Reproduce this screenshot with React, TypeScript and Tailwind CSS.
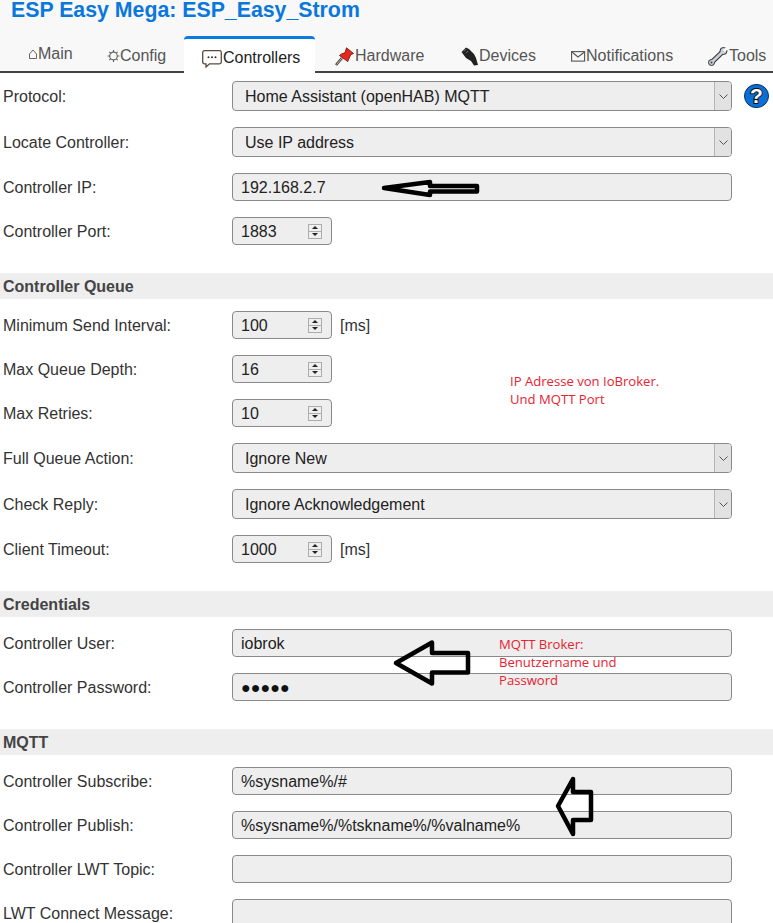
const F = "font-['Liberation_Sans',Arial,sans-serif]";

function SelectBox({ value }: { value: string }) {
  return (
    <div className="flex h-[30px] w-[500px] items-center justify-between rounded-[4px] border border-[#8a8a8a] bg-[#eeeeee] pl-[12px]">
      <span className="pt-[2px] text-[16px] text-[#222]">{value}</span>
      <div className="flex h-full w-[17px] items-center justify-center rounded-r-[3px] border-l border-[#b4b4b4] bg-[#e2e2e2]">
        <svg width="9" height="5" viewBox="0 0 9 5" fill="none" stroke="#555" strokeWidth="1">
          <path d="M0.5 0.5 L4.5 4.5 L8.5 0.5" />
        </svg>
      </div>
    </div>
  );
}

function TextBox({ value, masked }: { value?: string; masked?: boolean }) {
  return (
    <div className="flex h-[28px] w-[500px] items-center rounded-[4px] border border-[#8a8a8a] bg-[#eeeeee] pt-[2px] pl-[8px]">
      <span className={masked ? 'text-[16px] tracking-[0.1px] text-[#111]' : 'text-[16px] text-[#222]'}>{value}</span>
    </div>
  );
}

function NumberBox({ value }: { value: string }) {
  return (
    <div className="flex h-[28px] w-[100px] items-center justify-between rounded-[4px] border border-[#8a8a8a] bg-[#eeeeee] pr-[9px] pl-[8px]">
      <span className="pt-[2px] text-[16px] text-[#222]">{value}</span>
      <div className="flex h-[15px] w-[14px] flex-col border border-[#adadad] bg-[#efefef]">
        <div className="flex flex-1 items-center justify-center border-b border-[#adadad]">
          <svg width="6" height="3" viewBox="0 0 6 3"><path d="M3 0 L6 3 L0 3 Z" fill="#222" /></svg>
        </div>
        <div className="flex flex-1 items-center justify-center">
          <svg width="6" height="3" viewBox="0 0 6 3"><path d="M0 0 L6 0 L3 3 Z" fill="#222" /></svg>
        </div>
      </div>
    </div>
  );
}

function Row({ label, tall, children }: { label: string; tall?: boolean; children: React.ReactNode }) {
  return (
    <div className={tall ? 'flex h-[46px] items-center' : 'flex h-[44px] items-center'}>
      <div className="w-[232px] pt-[2px] pl-[3px] text-[16px] text-[#333]">{label}</div>
      {children}
    </div>
  );
}

function Section({ title }: { title: string }) {
  return <div className="mt-5 mb-1 flex h-[26px] items-center bg-[#eeeeee] pt-[2px] pl-[3px] text-[16px] font-bold text-[#444]">{title}</div>;
}

function Tab({ icon, label, className }: { icon: React.ReactNode; label: string; className: string }) {
  return (
    <div className={`flex h-[35px] shrink-0 items-center pt-[5px] pl-[18px] text-[16px] whitespace-nowrap text-[#555] ${className}`}>
      {icon}
      {label}
    </div>
  );
}

export default function App() {
  return (
    <div className={`relative h-[923px] w-[773px] overflow-hidden bg-white ${F}`}>
      <div className="h-[71px] bg-[#f8f8f8]">
        <div className="h-[36px] pl-[11px] text-[21.3px] leading-[21px] font-bold text-[#0a77dd]">ESP Easy Mega: ESP_Easy_Strom</div>
        <div className="relative z-10 flex pl-[10px]">
          <Tab
            label="Main"
            className="w-[79px] pb-[4px]"
            icon={
              <svg width="10" height="10" viewBox="0 0 10 10" fill="none" stroke="#666" strokeWidth="1" className="shrink-0">
                <path d="M1.5 9.5 L1.5 5 L5 1 L8.5 5 L8.5 9.5 Z" />
              </svg>
            }
          />
          <Tab
            label="Config"
            className="w-[95px]"
            icon={
              <svg width="13" height="14" viewBox="0 0 13 14" fill="none" stroke="#666" strokeWidth="1.2" className="shrink-0">
                <circle cx="6.5" cy="7" r="3.8" />
                <path d="M6.5 1v2M6.5 11v2M0.5 7h2M10.5 7h2M2.3 2.8l1.4 1.4M9.3 9.8l1.4 1.4M2.3 11.2l1.4-1.4M9.3 4.2l1.4-1.4" />
              </svg>
            }
          />
          <div className="mb-[-2px] flex h-[37px] w-[131px] shrink-0 items-center rounded-t-[4px] border-t-[3px] border-[#0a7be0] bg-white pt-[3px] pl-[18px] text-[16px] whitespace-nowrap text-[#222]">
            <svg width="21" height="18" viewBox="0 0 21 18" className="mt-[2px] shrink-0">
              <path d="M2.5 0.7h15a1.8 1.8 0 0 1 1.8 1.8v9.5a1.8 1.8 0 0 1-1.8 1.8H7.5l-3.5 3.2v-3.2H2.5a1.8 1.8 0 0 1-1.8-1.8V2.5a1.8 1.8 0 0 1 1.8-1.8z" fill="#fff" stroke="#5c4a40" strokeWidth="1.3" />
              <circle cx="6.5" cy="7.2" r="1" fill="#333" />
              <circle cx="10" cy="7.2" r="1" fill="#333" />
              <circle cx="13.5" cy="7.2" r="1" fill="#333" />
            </svg>
            Controllers
          </div>
          <Tab
            label="Hardware"
            className="w-[128px] pl-[20px]"
            icon={
              <svg width="20" height="19" viewBox="0 0 20 19" className="shrink-0">
                <path d="M1 18 L7 11" stroke="#3a3a3a" strokeWidth="2.6" />
                <path d="M1.5 17.5 L7 11" stroke="#d8c8a8" strokeWidth="1" />
                <path d="M11.5 0.8 L18.5 6.5 L15.8 7.6 L13.5 12.5 L12.8 14.5 L4.5 8.5 L6.5 7 L10 5.8 Z" fill="#e8281c" stroke="#7a160f" strokeWidth="0.9" />
              </svg>
            }
          />
          <Tab
            label="Devices"
            className="w-[110px]"
            icon={
              <svg width="18" height="19" viewBox="0 0 18 19" className="shrink-0">
                <path d="M0.5 5 L5 0.5 L8 2 L13 7 L15 11 L17 18 L13 18.5 L10 14 L5 11 Z" fill="#222" />
                <path d="M2.8 4.5 L5 2.2 M5 6.2 L7.2 4" stroke="#8a8a8a" strokeWidth="0.8" />
              </svg>
            }
          />
          <Tab
            label="Notifications"
            className="w-[137px]"
            icon={
              <svg width="15" height="11" viewBox="0 0 15 11" fill="none" stroke="#555" strokeWidth="1.1" className="shrink-0">
                <rect x="0.6" y="0.6" width="13" height="9.5" />
                <path d="M1 1 L7 6 L13.5 1" />
              </svg>
            }
          />
          <Tab
            label="Tools"
            className="w-[83px]"
            icon={
              <svg width="21" height="19" viewBox="0 0 21 19" fill="none" className="shrink-0">
                <path d="M3.5 15.5 L15.5 4" stroke="#2f2f2f" strokeWidth="5" />
                <circle cx="3.5" cy="15.500" r="3" fill="#c9ced6" stroke="#2f2f2f" strokeWidth="1" />
                <circle cx="15.5" cy="4" r="3.5" fill="#c9ced6" stroke="#2f2f2f" strokeWidth="1" />
                <path d="M3.5 15.5 L15.5 4" stroke="#c9ced6" strokeWidth="3" />
                <circle cx="3.5" cy="15.5" r="1" fill="#444" />
                <path d="M20 0 L16 4" stroke="#f8f8f8" strokeWidth="2.6" />
              </svg>
            }
          />
        </div>
      </div>
      <div className="h-[2px] bg-[#444]" />

      <Row label="Protocol:" tall>
        <SelectBox value="Home Assistant (openHAB) MQTT" />
        <div className="ml-3 flex h-[24px] w-[25px] items-center justify-center rounded-full border border-[#10325a] bg-[#0a6fd6] text-[21px] font-bold text-white [-webkit-text-stroke:2px_#111] [paint-order:stroke_fill]">?</div>
      </Row>
      <Row label="Locate Controller:" tall>
        <SelectBox value="Use IP address" />
      </Row>
      <Row label="Controller IP:">
        <TextBox value="192.168.2.7" />
      </Row>
      <Row label="Controller Port:">
        <NumberBox value="1883" />
      </Row>

      <Section title="Controller Queue" />
      <Row label="Minimum Send Interval:">
        <NumberBox value="100" />
        <span className="ml-2 pt-[2px] text-[16px] text-[#333]">[ms]</span>
      </Row>
      <Row label="Max Queue Depth:">
        <NumberBox value="16" />
      </Row>
      <Row label="Max Retries:">
        <NumberBox value="10" />
      </Row>
      <Row label="Full Queue Action:" tall>
        <SelectBox value="Ignore New" />
      </Row>
      <Row label="Check Reply:" tall>
        <SelectBox value="Ignore Acknowledgement" />
      </Row>
      <Row label="Client Timeout:">
        <NumberBox value="1000" />
        <span className="ml-2 pt-[2px] text-[16px] text-[#333]">[ms]</span>
      </Row>

      <Section title="Credentials" />
      <Row label="Controller User:">
        <TextBox value="iobrok" />
      </Row>
      <Row label="Controller Password:">
        <TextBox value="●●●●●" masked />
      </Row>

      <Section title="MQTT" />
      <Row label="Controller Subscribe:">
        <TextBox value="%sysname%/#" />
      </Row>
      <Row label="Controller Publish:">
        <TextBox value="%sysname%/%tskname%/%valname%" />
      </Row>
      <Row label="Controller LWT Topic:">
        <TextBox />
      </Row>
      <Row label="LWT Connect Message:">
        <TextBox />
      </Row>

      {/* annotations drawn on top of the screenshot */}
      <svg width="773" height="923" viewBox="0 0 773 923" fill="none" stroke="#000" strokeWidth="4.5" strokeLinejoin="round" className="pointer-events-none absolute top-0 left-0">
        <path d="M384 188 L430 182 L430 186 L477 186 L477 191.5 L430 191.5 L430 195 Z" />
        <path d="M396 663 L432 642.5 L432 653 L468 653 L468 672.5 L432 672.5 L432 683.5 Z" />
        <path d="M558 806 L573 779 L573 792 L591 792 L591 820 L573 820 L573 834 Z" />
      </svg>
      <div className="absolute top-[372px] left-[510px] font-['Open_Sans',sans-serif] text-[13.1px] leading-[18px] text-[#e8212f]">
        IP Adresse von IoBroker.
        <br />
        Und MQTT Port
      </div>
      <div className="absolute top-[635px] left-[499px] font-['Open_Sans',sans-serif] text-[13.1px] leading-[18px] text-[#e8212f]">
        MQTT Broker:
        <br />
        Benutzername und
        <br />
        Password
      </div>
    </div>
  );
}
